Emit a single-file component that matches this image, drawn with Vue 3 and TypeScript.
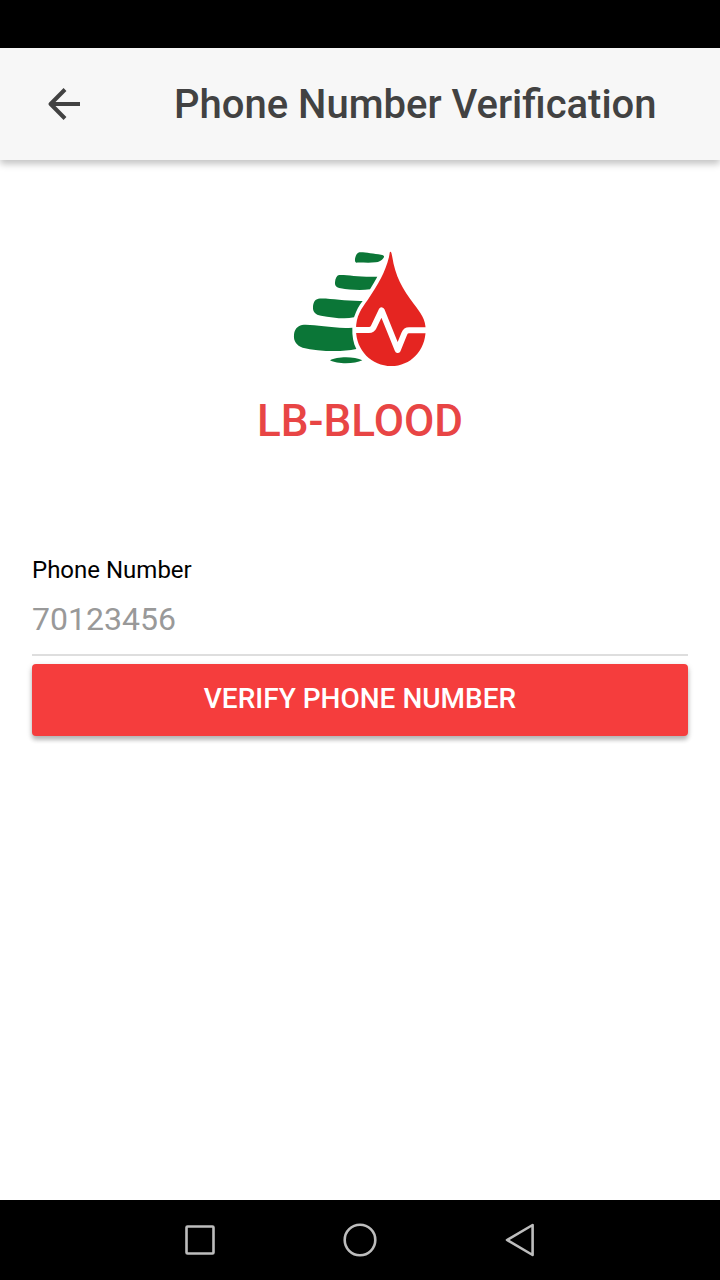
<script setup lang="ts">
import { ref } from 'vue'

const phone = ref('')
</script>

<template>
  <div class="screen">
    <div class="status-bar"></div>
    <header class="toolbar">
      <button class="back" type="button" aria-label="Back">
        <svg width="32" height="32" viewBox="0 0 32 32" fill="none" stroke="#424242" stroke-width="4">
          <path d="M32 16H3" />
          <path d="M17 1.5L2.6 16L17 30.5" stroke-linejoin="round" />
        </svg>
      </button>
      <h1 class="title">Phone Number Verification</h1>
    </header>

    <main class="content">
      <section class="brand">
        <svg class="logo" width="160" height="140" viewBox="0 0 480 420" aria-hidden="true">
          <g fill="#0b7637">
            <path d="M238 37C248 35 280 41 303 44C311 45 314 48 311 53C305 62 296 66 287 67C265 70 246 67 229 68C222 67 225 50 230 43Q233 38 238 37Z" />
            <path d="M177 105C205 104 236 112 292 110Q282 128 270 148C240 153 206 149 182 145C169 143 164 137 165 127C166 115 170 107 177 105Z" />
            <path d="M115 176C151 174 194 184 248 183Q233 200 222 232C191 239 158 232 123 227C106 225 98 215 99 201C100 187 104 179 115 176Z" />
            <path d="M66 255C105 252 157 267 217 263C216 288 220 309 229 327C178 338 113 333 68 323C50 317 40 303 42 285C43 269 52 258 66 255Z" />
            <path d="M150 361C171 349 224 349 247 361C224 373 171 373 150 361Z" />
          </g>
          <path fill="#e52521" d="M331 35C334 35 335 41 337 52C345 106 368 149 401 191C422 219 437 237 437 269C437 332 391 378 334 378C275 378 228 331 228 269C228 227 245 205 263 180C296 131 315 98 327 51C329 40 329 35 331 35Z" />
          <path d="M222 270H267Q277 270 281 261L305 211L353 330L373 281Q377 271 387 271H441" fill="none" stroke="#fff" stroke-width="18" stroke-linejoin="round" />
        </svg>
        <p class="name">LB-BLOOD</p>
      </section>

      <form class="form" @submit.prevent>
        <div class="field">
          <label for="phone">Phone Number</label>
          <input id="phone" v-model="phone" type="tel" placeholder="70123456" />
        </div>
        <button class="verify" type="submit">VERIFY PHONE NUMBER</button>
      </form>
    </main>

    <nav class="system-nav" aria-label="System">
      <button type="button" aria-label="Recent apps">
        <svg width="40" height="40" viewBox="0 0 40 40"><rect x="6.5" y="6.5" width="27" height="27" rx="1" /></svg>
      </button>
      <button type="button" aria-label="Home">
        <svg width="40" height="40" viewBox="0 0 40 40"><circle cx="20" cy="20" r="15.3" /></svg>
      </button>
      <button type="button" aria-label="Back">
        <svg width="40" height="40" viewBox="0 0 40 40"><path d="M32.6 5V35L7 20Z" /></svg>
      </button>
    </nav>
  </div>
</template>

<style>
body {
  margin: 0;
  background: #fff;
}
</style>

<style scoped>
.screen {
  display: flex;
  flex-direction: column;
  min-height: 100vh;
  background: #fff;
  font-family: Roboto, "Liberation Sans", sans-serif;
}

button {
  padding: 0;
  border: 0;
  background: none;
  font-family: inherit;
  cursor: pointer;
}

svg {
  display: block;
}

.status-bar {
  height: 48px;
  background: #000;
}

.toolbar {
  display: flex;
  align-items: center;
  height: 112px;
  background: #f7f7f7;
  box-shadow: 0 4px 7px rgba(0, 0, 0, 0.24);
}

.back {
  display: grid;
  place-items: center;
  width: 128px;
  height: 112px;
}

.title {
  margin: 0 0 0 46px;
  padding-top: 2px;
  color: #424242;
  font-size: 40px;
  font-weight: 500;
  line-height: 48px;
  white-space: nowrap;
}

.content {
  flex: 1;
  padding: 80px 32px 32px;
}

.brand {
  display: flex;
  flex-direction: column;
  align-items: center;
}

.name {
  margin: 12px 0 0;
  color: #e84545;
  font-size: 44px;
  font-weight: 500;
  line-height: 58px;
}

.form {
  display: flex;
  flex-direction: column;
  gap: 8px;
  margin-top: 104px;
}

.field {
  display: flex;
  flex-direction: column;
  border-bottom: 2px solid #dedede;
}

label {
  color: #000;
  font-size: 24px;
  line-height: 32px;
}

input {
  width: 100%;
  height: 68px;
  padding: 0 0 2px;
  box-sizing: border-box;
  border: 0;
  outline: 0;
  background: none;
  color: #000;
  font-family: inherit;
  font-size: 32px;
}

input::placeholder {
  color: #999;
  opacity: 1;
}

.verify {
  height: 72px;
  padding-bottom: 4px;
  border-radius: 4px;
  background: #f53d3d;
  box-shadow: 0 4px 4px rgba(0, 0, 0, 0.2), 0 2px 6px rgba(0, 0, 0, 0.16);
  color: #fff;
  font-size: 28px;
  font-weight: 500;
}

.system-nav {
  display: flex;
  justify-content: center;
  height: 80px;
  background: #000;
}

.system-nav button {
  display: grid;
  place-items: center;
  width: 160px;
}

.system-nav svg {
  fill: none;
  stroke: #bdbdbd;
  stroke-width: 2.6;
  stroke-linejoin: round;
}
</style>
